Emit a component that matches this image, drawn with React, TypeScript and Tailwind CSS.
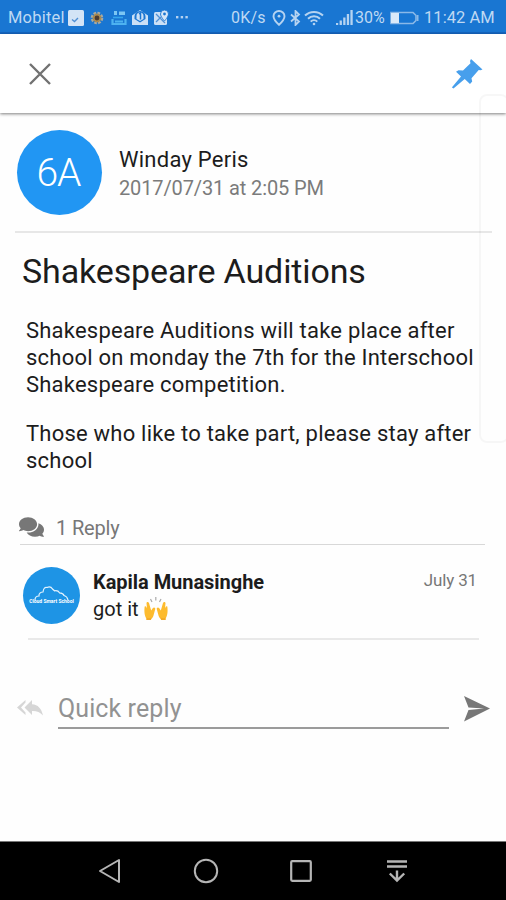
import type { ReactNode } from 'react';
import { FaComments } from 'react-icons/fa';

const MESSAGE = [
  ['Shakespeare Auditions will take place after', 'school on monday the 7th for the Interschool', 'Shakespeare competition.'],
  ['Those who like to take part, please stay after', 'school'],
];

function NotificationIcons() {
  return (
    <>
      <svg className="ml-[3px] w-4 h-4 shrink-0" viewBox="0 0 16 16">
        <rect width="16" height="16" rx="1.5" fill="#d3e4f6" />
        <path d="M4 9.5l2.5 2L10 8" fill="none" stroke="#4f8fd4" strokeWidth="1.4" />
      </svg>
      <svg className="ml-[6px] w-[14px] h-[14px] shrink-0" viewBox="0 0 14 14">
        <circle cx="7" cy="7" r="5" fill="none" stroke="#a9aaa0" strokeWidth="2.6" strokeDasharray="2.6 1.3" />
        <circle cx="7" cy="7" r="3.4" fill="#4b3b30" stroke="#a98a50" strokeWidth="2" />
      </svg>
      <svg className="ml-[7px] w-4 h-4 shrink-0" viewBox="0 0 16 16" fill="none" stroke="#4db2f0">
        <path d="M3 1h3v4H3zM8 1.5h6V5H8z" fill="#7cc6f3" stroke="none" />
        <path d="M2 7.5h10" strokeWidth="1.6" stroke="#36a5eb" />
        <path d="M1.5 9v5h13V9M4 11.5h8" strokeWidth="2.2" />
      </svg>
      <svg className="ml-1 w-[18px] h-[17px] shrink-0" viewBox="0 0 18 17">
        <path d="M1 6.5L9 1l8 5.5V16H1z" fill="#cbe0f6" />
        <path d="M3.5 7.5a5.5 5.5 0 0 1 11 0V10L9 13.5 3.5 10z" fill="#1b76d2" />
        <path d="M5.5 7a3.5 3.5 0 0 1 7 0v3L9 12l-3.5-2z" fill="#cbe0f6" />
        <path d="M8 5l1.5-1v6.5" fill="none" stroke="#1b76d2" strokeWidth="1.5" />
      </svg>
      <svg className="ml-[5px] w-[15px] h-4 shrink-0" viewBox="0 0 15 16">
        <rect y="2" width="13" height="13" rx="1.5" fill="#cbe0f6" />
        <path d="M2 4l9 9M2 12l5-5" stroke="#4f90d5" strokeWidth="1.3" />
        <path d="M10.5 0a4 4 0 0 1 4 4c0 2.5-4 7-4 7s-4-4.500-4-7a4 4 0 0 1 4-4z" fill="#d5e6f8" stroke="#1b76d2" strokeWidth=".9" />
        <circle cx="10.5" cy="4" r="1.4" fill="#1b76d2" />
      </svg>
      <svg className="ml-[6px] w-[14px] h-4 shrink-0" viewBox="0 0 14 16" fill="#b5d2f1">
        <rect x="1" y="6" width="2.4" height="2.4" />
        <rect x="5.7" y="6" width="2.4" height="2.4" />
        <rect x="10.4" y="6" width="2.4" height="2.4" />
      </svg>
    </>
  );
}

function StatusBar() {
  return (
    <div className="flex h-[34px] shrink-0 items-center border-b-2 border-[#1565c0] bg-[#1976d2] pt-[3px] text-[16px] leading-5 whitespace-nowrap text-[#bfd9f3]">
      <span className="ml-2 w-[57px] pt-px text-[16.5px] tracking-[0.2px]">Mobitel</span>
      <NotificationIcons />
      <span className="ml-[42px] w-[37px] pt-px tracking-[0.2px]">0K/s</span>
      <svg className="ml-[4px] w-[14px] h-4 shrink-0" viewBox="0 0 14 16" fill="none" stroke="#b5d3f1" strokeWidth="1.9">
        <path d="M7 14.8S1.5 9.7 1.5 6.2a5.5 5.2 0 0 1 11 0C12.5 9.7 7 14.8 7 14.8z" />
        <circle cx="7" cy="6.2" r="1.4" fill="#b5d3f1" stroke="none" />
      </svg>
      <svg className="ml-[4px] w-[11px] h-4 shrink-0" viewBox="0 0 11 16" fill="none" stroke="#b5d3f1" strokeWidth="1.8">
        <path d="M1 4.5l8 7L5.5 15V1L9 4.5l-8 7" />
      </svg>
      <svg className="ml-[3px] w-5 h-4 shrink-0" viewBox="0 0 20 16" fill="none" stroke="#b5d3f1" strokeWidth="2">
        <path d="M1 5.5a13 13 0 0 1 18 0M4 8.7a8.6 8.6 0 0 1 12 0M6.7 11.6a4.7 4.7 0 0 1 6.6 0" />
        <circle cx="10" cy="14" r="1.3" fill="#b5d3f1" stroke="none" />
      </svg>
      <svg className="ml-[12px] w-[18px] h-4 shrink-0" viewBox="0 0 18 16" fill="#b5d3f1">
        <rect x="0" y="13" width="2.2" height="2" />
        <rect x="3.6" y="10.5" width="2.3" height="4.5" />
        <rect x="7.2" y="7.5" width="2.3" height="7.5" />
        <rect x="10.8" y="4" width="2.3" height="11" />
        <rect x="14.4" y="0" width="2.3" height="15" />
      </svg>
      <span className="ml-[1px] w-[32px]">30%</span>
      <svg className="ml-[3px] w-[29px] h-[14px] shrink-0" viewBox="0 0 29 14">
        <path d="M1 1.5h22l3 3v5l-3 3H1z" fill="none" stroke="#8bb9e8" strokeWidth="1.6" />
        <rect x="1" y="2" width="8" height="10" fill="#dae9f9" />
        <rect x="27" y="4" width="1.5" height="6" fill="#8bb9e8" />
      </svg>
      <span className="ml-[5px] pt-px text-[16.5px] tracking-[0.05px]">11:42 AM</span>
    </div>
  );
}

function Toolbar() {
  return (
    <div className="relative flex h-[79px] shrink-0 items-center justify-between bg-white pr-[23px] pl-[29px] shadow-[0_1px_3px_rgba(0,0,0,0.5)]">
      <svg className="w-[22px] h-[22px]" viewBox="0 0 22 22" stroke="#727272" strokeWidth="2.4">
        <path d="M1 1l20 20M21 1L1 21" />
      </svg>
      <svg className="w-[31px] h-[30px]" viewBox="0 0 31 30" fill="#479fec">
        <path d="M19 0l11.5 10.5-2 .8-1.8-.3-7.2 8.2.7 3.3-2.2 2.5-5.3-5.1L1.500 29.500l-1.700-1L9 17.500 4 12.800l2.500-1.500 4.500.2 7.500-7.300-.5-2.200z" />
      </svg>
    </div>
  );
}

function RaisedHands() {
  return (
    <svg className="ml-[5px] w-6 h-[25px]" viewBox="0 0 24 25" role="img" aria-label="Raising hands">
      <path d="M6.5 2L8 5M11.8 0v3.5M17 2l-1.500 3" stroke="#aaa" strokeWidth="1.2" />
      <g id="hand">
        <path d="M.7 9.5c1-.8 1.600 0 2.300 2L2.500 6c.1-1.500 2-1.500 2.500 0l1.300 4.500.9 3 1.700-2.500c1.200-1.200 2.700-.2 2.300 1.200L9.500 18.500c-.5 2-1.500 3-2.500 3.500v1H2.500v-1.500C.5 19 0 14 .7 9.500z" fill="#fdbb2e" />
        <path d="M2.500 20.500c1.500 1 3 .9 5 0L7 23H2.500z" fill="#f3aa28" />
      </g>
      <use href="#hand" transform="matrix(-1 0 0 1 24 0)" />
    </svg>
  );
}

function Avatar({ className, children }: { className: string; children: ReactNode }) {
  return <div className={`flex shrink-0 items-center justify-center rounded-full text-white ${className}`}>{children}</div>;
}

function NavBar() {
  return (
    <div className="mt-auto flex h-[59px] shrink-0 items-center border-t border-[#777] bg-black pl-[98px]">
      <svg className="w-[23px] h-[26px]" viewBox="0 0 23 26" fill="none" stroke="#b5b5b5" strokeWidth="2" strokeLinejoin="round">
        <path d="M21 2v22L2 13z" />
      </svg>
      <svg className="ml-[72px] w-[26px] h-[26px]" viewBox="0 0 26 26" fill="none" stroke="#b5b5b5" strokeWidth="2">
        <circle cx="13" cy="13" r="11.2" />
      </svg>
      <svg className="ml-[70px] w-6 h-6" viewBox="0 0 24 24" fill="none" stroke="#b5b5b5" strokeWidth="2.2">
        <rect x="2.2" y="2.2" width="19.6" height="19.6" rx="1" />
      </svg>
      <svg className="ml-[73px] w-[22px] h-6" viewBox="0 0 22 24" fill="none" stroke="#b5b5b5" strokeWidth="2.4">
        <path d="M1 2.500h20M1 7.500h20M11 11.500v10M3.800 14.500l7.200 7 7.200-7" />
      </svg>
    </div>
  );
}

export default function App() {
  return (
    <div className="relative flex h-[900px] w-[506px] flex-col overflow-hidden bg-[#fefefe] font-['Roboto',sans-serif] text-[#1c1c1c]">
      <StatusBar />
      <Toolbar />

      {/* edge panel handle */}
      <div className="absolute top-[94px] left-[479px] h-[349px] w-[30px] rounded-lg border-2 border-black/[0.03]" />

      <div className="flex h-[118px] items-center pl-[17px]">
        <Avatar className="h-[85px] w-[85px] bg-[#2196f3] pt-[3px] pr-[2px] text-[39px] font-light tracking-[-1px]">6A</Avatar>
        <div className="ml-[17px] pt-[2px] whitespace-nowrap">
          <p className="text-[22px] leading-[29px] tracking-[0.25px]">Winday Peris</p>
          <p className="text-[20px] leading-[28px] tracking-[-0.12px] text-[#7b7b7b]">2017/07/31 at 2:05 PM</p>
        </div>
      </div>
      <div className="mr-[14px] ml-[15px] h-[2px] bg-[#e7e7e7]" />

      <h1 className="mt-[17px] ml-[22px] text-[34px] leading-[42px] tracking-[-0.13px] whitespace-nowrap">Shakespeare Auditions</h1>
      <div className="mt-[25px] ml-[26px] space-y-[22px] text-[22px] leading-[27px] tracking-[0.22px] whitespace-nowrap">
        {MESSAGE.map((lines) => (
          <div key={lines[0]}>
            {lines.map((line) => (
              <p key={line}>{line}</p>
            ))}
          </div>
        ))}
      </div>

      <div className="mt-[38px] mr-[21px] ml-[20px] flex h-[33px] items-center border-b border-[#d8d8d8] text-[20px] text-[#777]">
        <FaComments className="-ml-px mb-[3px] h-[24px] w-[25px]" />
        <span className="mb-px ml-[12px] tracking-[-0.15px]">1 Reply</span>
      </div>

      <div className="mr-[29px] ml-[23px] flex h-[93px] pt-[22px]">
        <Avatar className="h-[57px] w-[57px] bg-[#1e94e5]">
          <div className="flex flex-col items-center pb-[2px]">
            <svg className="w-[36px] h-[14px]" viewBox="0 0 36 14" fill="none" stroke="#e4f3fe" strokeWidth="1.2">
              <path d="M2 14c0-2.500 1.500-4 4-4-.3-2.500 1.500-4 4-4 .5-4 2-5 4-4.500 2-1 4-1 5.500 1.500l2 1.800c2.500-.5 4 .2 5 2 3 .2 4 1 4.500 2.700 2 .5 3.500 2 4 4.500" />
            </svg>
            <span className="-mt-px text-[5px] leading-[5px] font-bold">Cloud Smart School</span>
          </div>
        </Avatar>
        <div className="ml-[13px] pt-px whitespace-nowrap">
          <p className="text-[20px] leading-[28px] font-bold tracking-[-0.04px]">Kapila Munasinghe</p>
          <p className="flex items-center text-[20px] leading-[26px]">got it <RaisedHands /></p>
        </div>
        <span className="ml-auto pt-px text-[17px] leading-[24px] tracking-[-0.15px] text-[#777]">July 31</span>
      </div>
      <div className="mr-[27px] ml-[28px] h-[2px] bg-[#e9e9e9]" />

      <div className="mt-[49px] flex h-[40px] pl-[17px]">
        <svg className="mt-[11px] h-[16px] w-[26px]" viewBox="0 0 26 16" fill="#d6d6d6">
          <path d="M8.500 0v2.500L4 7.500l4.500 5V15L0 7.500z" />
          <path d="M15 0v4.200C21 4.500 24.500 8.500 26 15.500c-3-3.500-6.500-4.700-11-4.500V15L7.500 7.500z" />
        </svg>
        <div className="ml-[15px] w-[391px] border-b-2 border-[#9b9b9b] text-[25px] leading-[40px] tracking-[0.1px] text-[#929292]">Quick reply</div>
        <svg className="mt-[7px] ml-[14px] w-[28px] h-[26px]" viewBox="0 0 28 26" fill="#777">
          <path d="M1 0l26 12.500L1 25.500l4.500-11.500L21 12.500 5.500 11.500z" />
        </svg>
      </div>

      <NavBar />
    </div>
  );
}
